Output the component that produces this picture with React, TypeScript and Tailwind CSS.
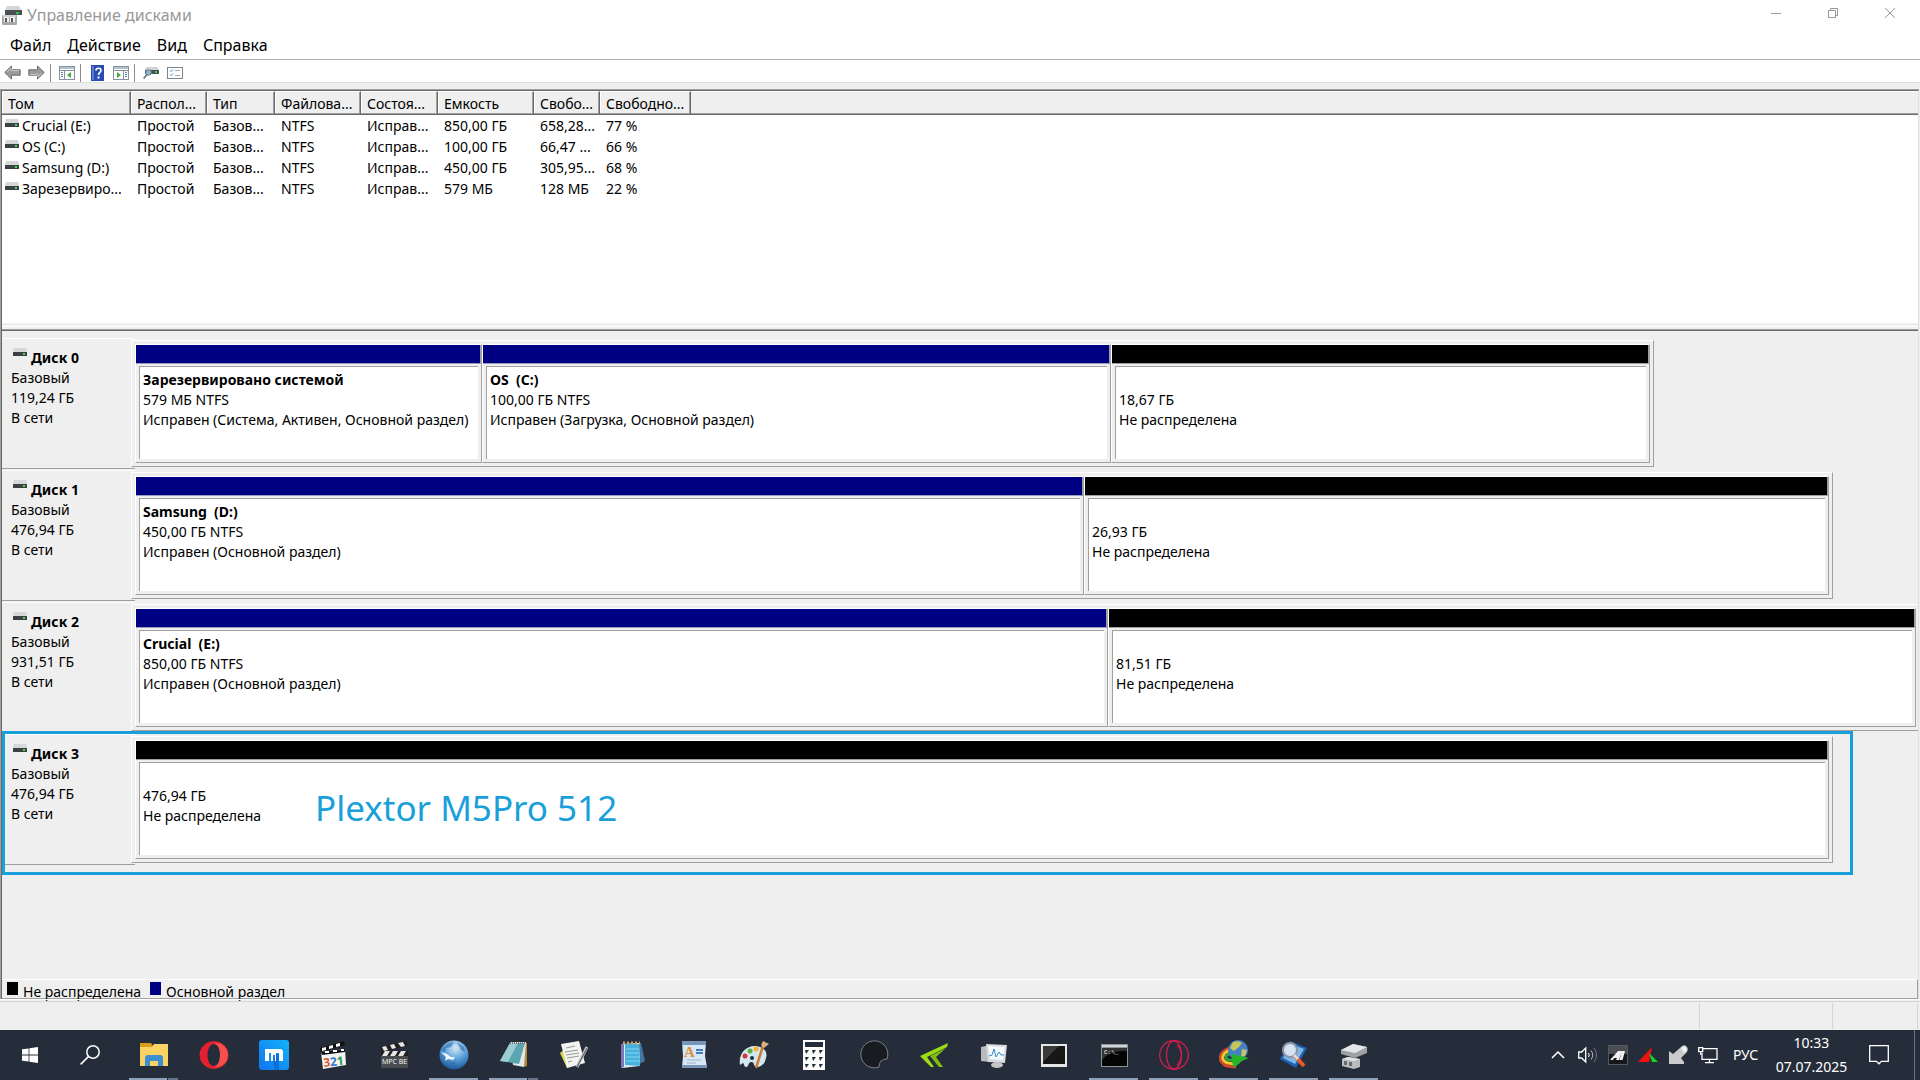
import type { ReactNode } from "react";

type Segment = { size: number; kind: "primary" | "free"; name?: string; info: string; status: string };
type Disk = { name: string; capacity: string; span: number; full?: boolean; segments: Segment[] };

const GRAPH_SPAN = 1787;

const disks: Disk[] = [
  {
    name: "Диск 0",
    capacity: "119,24 ГБ",
    span: 1523,
    segments: [
      { size: 347, kind: "primary", name: "Зарезервировано системой", info: "579 МБ NTFS", status: "Исправен (Система, Активен, Основной раздел)" },
      { size: 629, kind: "primary", name: "OS  (C:)", info: "100,00 ГБ NTFS", status: "Исправен (Загрузка, Основной раздел)" },
      { size: 539, kind: "free", info: "18,67 ГБ", status: "Не распределена" },
    ],
  },
  {
    name: "Диск 1",
    capacity: "476,94 ГБ",
    span: 1702,
    segments: [
      { size: 949, kind: "primary", name: "Samsung  (D:)", info: "450,00 ГБ NTFS", status: "Исправен (Основной раздел)" },
      { size: 745, kind: "free", info: "26,93 ГБ", status: "Не распределена" },
    ],
  },
  {
    name: "Диск 2",
    capacity: "931,51 ГБ",
    span: 1787,
    full: true,
    segments: [
      { size: 973, kind: "primary", name: "Crucial  (E:)", info: "850,00 ГБ NTFS", status: "Исправен (Основной раздел)" },
      { size: 808, kind: "free", info: "81,51 ГБ", status: "Не распределена" },
    ],
  },
  {
    name: "Диск 3",
    capacity: "476,94 ГБ",
    span: 1702,
    segments: [{ size: 1694, kind: "free", info: "476,94 ГБ", status: "Не распределена" }],
  },
];

const columns = ["Том", "Распол...", "Тип", "Файлова...", "Состоя...", "Емкость", "Свобо...", "Свободно..."];

const volumes = [
  ["Crucial (E:)", "Простой", "Базов...", "NTFS", "Исправ...", "850,00 ГБ", "658,28...", "77 %"],
  ["OS (C:)", "Простой", "Базов...", "NTFS", "Исправ...", "100,00 ГБ", "66,47 ...", "66 %"],
  ["Samsung (D:)", "Простой", "Базов...", "NTFS", "Исправ...", "450,00 ГБ", "305,95...", "68 %"],
  ["Зарезервиро...", "Простой", "Базов...", "NTFS", "Исправ...", "579 МБ", "128 МБ", "22 %"],
];

function DriveIcon() {
  return (
    <svg width="14" height="9" viewBox="0 0 14 9" className="shrink-0" aria-hidden="true">
      <path d="M1 0h12l1 4H0z" fill="#d5d7d8" />
      <rect y="4" width="14" height="4" fill="#3d4144" />
      <rect x="10" y="5" width="2" height="2" fill="#35e04a" />
    </svg>
  );
}

function AppIcon() {
  return (
    <svg width="20" height="19" viewBox="0 0 20 19" className="shrink-0" aria-hidden="true">
      <path d="M5 0h12l2 4H3z" fill="#d3d5d6" />
      <rect x="3" y="4" width="17" height="5" fill="#4b4f52" />
      <rect x="14" y="6" width="3" height="2" fill="#2fc544" />
      <rect y="9" width="15" height="10" rx="1" fill="#a6a8a9" />
      <rect x="1" y="9" width="13" height="2" fill="#cfd0d1" />
      <rect x="2" y="11" width="5" height="5" fill="#f0f0f0" />
      <rect x="8" y="11" width="5" height="5" fill="#f0f0f0" />
      <rect x="3" y="12" width="2" height="4" fill="#55585a" />
      <rect x="9" y="12" width="2" height="4" fill="#55585a" />
    </svg>
  );
}

function ArrowIcon({ right = false }: { right?: boolean }) {
  return (
    <svg width="17" height="15" viewBox="0 0 17 15" className={right ? "rotate-180" : ""} aria-hidden="true">
      <path d="M.8 7.500 7.500 1v3.800h8.700v5.400H7.500V14z" fill="#9b9b9b" stroke="#6c6c6c" />
      <path d="M3 7 7 3v2.600h8" fill="none" stroke="#c9c9c9" />
    </svg>
  );
}

function PanelIcon({ flip = false }: { flip?: boolean }) {
  return (
    <svg width="16" height="14" viewBox="0 0 16 14" aria-hidden="true">
      <rect x=".5" y=".5" width="15" height="13" fill="#fff" stroke="#8393a0" />
      <rect x="1" y="1" width="14" height="2" fill="#b4c2cc" />
      <path d="M1 4.500h14" stroke="#8393a0" />
      <path d={flip ? "M10.500 5v8" : "M5.500 5v8"} stroke="#8393a0" />
      <path d={flip ? "M12 6.500h2M12 8.500h2M12 10.500h2" : "M2 6.500h2M2 8.500h2M2 10.500h2"} stroke="#5a87b5" />
      <path d={flip ? "M4 6l4 3-4 3z" : "M12 6 8 9l4 3z"} fill="#3fae35" />
    </svg>
  );
}

function HelpIcon() {
  return (
    <svg width="13" height="16" viewBox="0 0 13 16" aria-hidden="true">
      <rect width="13" height="16" fill="#2b4bb0" />
      <rect x="1" y="1" width="2" height="14" fill="#5d78d2" />
      <path d="M5 5.500c0-3 5-3 5 0 0 2-2.500 2-2.500 4.500" fill="none" stroke="#fff" strokeWidth="1.700" />
      <rect x="6.500" y="11.500" width="2" height="2" fill="#fff" />
    </svg>
  );
}

function RescanIcon() {
  return (
    <svg width="16" height="13" viewBox="0 0 16 13" aria-hidden="true">
      <path d="M3 1h11l2 3H2z" fill="#cfd3d6" />
      <rect x="2" y="4" width="14" height="4" fill="#4a4f53" />
      <rect x="12" y="5" width="2" height="2" fill="#36d049" />
      <circle cx="5.500" cy="6.500" r="2.800" fill="#8fb6d0" stroke="#5c7f98" />
      <path d="M4 8.500.6 12.500" stroke="#666c70" strokeWidth="1.600" />
    </svg>
  );
}

function ChecklistIcon() {
  return (
    <svg width="16" height="12" viewBox="0 0 16 12" aria-hidden="true">
      <rect x=".5" y=".5" width="15" height="11" fill="#fff" stroke="#7c868e" />
      <path d="M3 3.500l1 1 2-2M3 7.500l1 1 2-2" fill="none" stroke="#3c7ec0" />
      <path d="M8 3.500h5M8 8.500h5" stroke="#9aa7b1" />
    </svg>
  );
}

function ToolButton({ label, children }: { label: string; children: ReactNode }) {
  return (
    <button aria-label={label} className="flex h-5 w-6 items-center justify-center">
      {children}
    </button>
  );
}

function ToolSeparator() {
  return <span className="mr-1 ml-px h-[18px] w-px bg-[#8c8c8c]" />;
}

function DiskSegment({ seg }: { seg: Segment }) {
  return (
    <div className="flex min-w-0 flex-col border-t border-l border-r border-b border-t-white border-l-white border-r-[#a0a0a0] border-b-[#a0a0a0]">
      <div
        className={
          seg.kind === "primary"
            ? "h-[19px] border-r border-b border-r-[#a0a0a0] border-b-[#9a9ac0] bg-[#000082]"
            : "h-[19px] border-r border-b border-r-[#a0a0a0] border-b-[#a0a0a0] bg-black"
        }
      />
      <div className="mx-[3px] mt-[2px] mb-[3px] flex-1 overflow-hidden border-t border-l border-[#a0a0a0] bg-white px-[3px] pt-[3px] leading-5 whitespace-pre">
        <div className="h-5 font-bold">{seg.name}</div>
        <div>{seg.info}</div>
        <div className="overflow-hidden">{seg.status}</div>
      </div>
    </div>
  );
}

function DiskRow({ disk, children }: { disk: Disk; children?: ReactNode }) {
  return (
    <div className="relative flex h-[132px]">
      <div className="h-[131px] w-[133px] shrink-0 border-t border-b border-t-white border-b-[#a0a0a0] pt-[9px] pl-[9px] leading-5">
        <div className="flex pl-[2px] font-bold">
          <DriveIcon />
          <span className="pl-1">{disk.name}</span>
        </div>
        <div>Базовый</div>
        <div>{disk.capacity}</div>
        <div>В сети</div>
      </div>
      <div
        className="mt-[2px] -ml-1 grid h-[127px] min-w-0 flex-1"
        style={{ gridTemplateColumns: `${disk.span}fr ${GRAPH_SPAN - disk.span}fr` }}
      >
        <div
          className={
            disk.full
              ? "grid min-w-0 border-t border-b border-l border-t-white border-b-[#a0a0a0] border-l-white py-[3px] pr-[2px] pl-[3px]"
              : "grid min-w-0 border border-t-white border-r-[#a0a0a0] border-b-[#a0a0a0] border-l-white p-[3px]"
          }
          style={{ gridTemplateColumns: disk.segments.map((s) => `${s.size}fr`).join(" ") }}
        >
          {disk.segments.map((seg) => (
            <DiskSegment key={seg.info} seg={seg} />
          ))}
        </div>
      </div>
      {children}
    </div>
  );
}

/* taskbar */

function Icon30({ children }: { children: ReactNode }) {
  return (
    <svg width="30" height="30" viewBox="0 0 30 30" aria-hidden="true">
      {children}
    </svg>
  );
}

const apps: { label: string; open?: boolean; group?: boolean; icon: ReactNode }[] = [
  {
    label: "Проводник",
    open: true,
    group: true,
    icon: (
      <Icon30>
        <path d="M1 3h11l2 3v4H1z" fill="#d99c1a" />
        <path d="M1 7h12l2-3h14v22H1z" fill="#fbd264" />
        <path d="M6 26v-8q0-3 3-3h12q3 0 3 3v8h-5v-5h-8v5z" fill="#3c8fd0" />
      </Icon30>
    ),
  },
  {
    label: "Opera",
    icon: (
      <Icon30>
        <path fillRule="evenodd" d="M15 1a14.500 14 0 1 0 .01 0zM15 4c4 0 6 5 6 11s-2 11-6 11-6.500-5-6.500-11S11 4 15 4z" fill="#e2202f" />
        <path d="M15 4c3-3 14 1 14 11S18 29 15 26c4 0 6-5 6-11S19 4 15 4z" fill="#f4504e" />
      </Icon30>
    ),
  },
  {
    label: "Maxthon",
    icon: (
      <Icon30>
        <defs>
          <linearGradient id="maxthon" x1="0" y1="1" x2="1" y2="0">
            <stop offset="0" stopColor="#1273ee" />
            <stop offset="1" stopColor="#12b4fb" />
          </linearGradient>
        </defs>
        <rect width="30" height="30" rx="3" fill="url(#maxthon)" />
        <path d="M12 14h8v16h-4z" fill="#0d6fd8" />
        <path d="M6 21V9h15q3 0 3 3v9h-4v-8h-3v8h-5v-8h-2v8z" fill="#fff" />
        <path d="M14 15h2v6h-2z" fill="#1a7ee6" />
      </Icon30>
    ),
  },
  {
    label: "Media Player Classic",
    icon: (
      <Icon30>
        <path d="M1 8 25 1l1 4L2 12z" fill="#111" />
        <path d="M3 8l4-1 0 3-4 1zM10 6l4-1 0 3-4 1zM17 4l4-1 0 3-4 1z" fill="#fff" />
        <path d="M2 12 26 9l1 16L4 29z" fill="#f4f4f4" />
        <path d="M2 12 26 9v3L3 15z" fill="#111" />
        <path d="M6 12h4M14 11h4M22 10h3" stroke="#fff" strokeWidth="2" />
        <text x="4" y="26" fontFamily="Open Sans, sans-serif" fontSize="12" fontWeight="700" transform="rotate(-6 14 20)">
          <tspan fill="#dd5528">3</tspan>
          <tspan fill="#2878cc">2</tspan>
          <tspan fill="#299b3a">1</tspan>
        </text>
      </Icon30>
    ),
  },
  {
    label: "MPC-BE",
    icon: (
      <Icon30>
        <path d="M1 7 27 1l1 5L3 12z" fill="#202020" />
        <path d="M3 7l4-1 2 4-4 1zM11 5l4-1 2 4-4 1zM19 3l5-1 2 4-4 1z" fill="#e6e6e6" />
        <rect x="2" y="11" width="27" height="17" rx="1" fill="#4a4c4f" />
        <rect x="2" y="11" width="27" height="5" fill="#202020" />
        <path d="M6 11h5l-3 5H3zM14 11h5l-3 5h-5zM22 11h5l-3 5h-5z" fill="#e6e6e6" />
        <text x="3" y="24" fontFamily="Open Sans, sans-serif" fontSize="7" fill="#fff">MPC BE</text>
      </Icon30>
    ),
  },
  {
    label: "Сеть",
    open: true,
    icon: (
      <Icon30>
        <defs>
          <radialGradient id="globe" cx=".55" cy=".25" r=".8">
            <stop offset="0" stopColor="#d6e9f8" />
            <stop offset=".5" stopColor="#5a9fd8" />
            <stop offset="1" stopColor="#174c94" />
          </radialGradient>
        </defs>
        <circle cx="15" cy="15" r="14.500" fill="url(#globe)" />
        <path d="M3 10q5-8 12-8l-3 5-5 1-1 4zM18 2l7 5 1 5-4-2zM10 22l6 0 1 3-3 2z" fill="#2f6dab" opacity=".6" />
        <path d="M2 12l6 2 4 3 4 0-2 3-5-1-3 2 1-4z" fill="#eef6fc" />
      </Icon30>
    ),
  },
  {
    label: "Блокнот AkelPad",
    open: true,
    group: true,
    icon: (
      <Icon30>
        <path d="M22 3h6v23l-4 1z" fill="#b98435" />
        <path d="M11 2h16l-2 25-11-2z" fill="#dfe8e9" />
        <path d="M11 3h15l-6 21L1 21z" fill="#5aa5b0" />
        <path d="M11 3h8L9 22l-8-1z" fill="#9accd2" />
        <path d="M11 3h16" stroke="#777" strokeWidth="2" strokeDasharray="1 1" />
      </Icon30>
    ),
  },
  {
    label: "Редактор",
    icon: (
      <Icon30>
        <path d="M1 13l4-3 8 16-5 2z" fill="#d9d645" />
        <path d="M2 4 20 1l6 22-18 5z" fill="#f3f3f1" />
        <path d="M7 8l9-2M6 12l13-2M7 15l13-2M8 18l12-2M9 22l4-1" stroke="#999" />
        <path d="M28 7 18 27" stroke="#c1c4c8" strokeWidth="3" />
        <path d="M28 8 18 27" stroke="#50545a" />
      </Icon30>
    ),
  },
  {
    label: "Notepad",
    icon: (
      <Icon30>
        <path d="M18 4l4-1 4 18-9 5z" fill="#47749f" />
        <path d="M2 4 20 3l1 23-18 2z" fill="#e5eef2" />
        <path d="M6 4h14l1 22-15-1z" fill="#46b0de" />
        <path d="M2 4l3 0 0 23-3 1z" fill="#8274b8" />
        <path d="M7 9h13M7 13h13M7 17h14M7 21h14" stroke="#85d6f3" />
        <path d="M4 3h17" stroke="#c7a46a" strokeWidth="3" strokeDasharray="2 2" />
      </Icon30>
    ),
  },
  {
    label: "WordPad",
    icon: (
      <Icon30>
        <path d="M3 1h24l-1 15 2 11H3l1-11z" fill="#d5e8f5" />
        <path d="M3 1h24v4H3zM3 25h25v3H3z" fill="#7695b8" />
        <text x="5" y="17" fontFamily="Liberation Serif, serif" fontSize="15" fontWeight="700" fill="#e78a35">A</text>
        <path d="M17 10h7M17 13h7" stroke="#4777bc" strokeWidth="2" />
        <path d="M8 20h14M8 23h9" stroke="#9fb3c2" />
      </Icon30>
    ),
  },
  {
    label: "Paint",
    icon: (
      <Icon30>
        <path d="M1 25C-1 13 8 5 17 6c8 1 12 6 10 12-1 5-4 9-9 9-4 0-2-4-5-5-4-1-3 5-6 5-2 0-2-4-3-4z" fill="#d3e7f2" />
        <circle cx="6" cy="16" r="2.500" fill="#d5373c" />
        <circle cx="11" cy="11" r="2.500" fill="#5bae44" />
        <circle cx="17" cy="9" r="2.500" fill="#efb72f" />
        <circle cx="13" cy="18" r="2" fill="#262d3a" />
        <path d="M24 6 17 28" stroke="#ce7c35" strokeWidth="2.500" />
        <path d="M22 5l2-4 6 3-5 4z" fill="#dab180" />
      </Icon30>
    ),
  },
  {
    label: "Калькулятор",
    icon: (
      <Icon30>
        <rect x="4" width="22" height="30" fill="#fff" />
        <rect x="6" y="2" width="18" height="5" fill="#262d3a" />
        <path d="M6 10h4l-3 4zM13 10h4l-3 4zM20 10h4l-3 4zM6 17h4l-3 4zM13 17h4l-3 4zM20 17h4l-3 4zM6 24h4l-3 4zM13 24h4l-3 4zM20 24h4l-3 4z" fill="#262d3a" />
      </Icon30>
    ),
  },
  {
    label: "Заметки",
    icon: (
      <Icon30>
        <path d="M20 27A13.500 13.500 0 1 1 28 19Q20 19 20 27" fill="#181c20" stroke="#7b8086" />
      </Icon30>
    ),
  },
  {
    label: "GeForce",
    icon: (
      <Icon30>
        <path d="M29 3 1 16l11 11h3l-7-10L28 7z" fill="#9ddb14" />
        <path d="M27 8 11 16l9 11h4l-7-10z" fill="#7fbd10" />
      </Icon30>
    ),
  },
  {
    label: "Монитор ресурсов",
    icon: (
      <Icon30>
        <path d="M2 7l9-2v17l-9-1z" fill="#b9bcbe" />
        <path d="M7 4 28 5l-2 18-17-1z" fill="#d9dbdc" />
        <path d="M9 6l17 1-2 13-13-1z" fill="#f5fafd" />
        <path d="M10 16l3-1 2-6 2 8 3-5 2 3h3" fill="none" stroke="#3889c9" />
        <ellipse cx="18" cy="25" rx="6" ry="3" fill="#c5c7c9" />
      </Icon30>
    ),
  },
  {
    label: "Экран",
    icon: (
      <Icon30>
        <rect x="2" y="4" width="26" height="23" fill="#e6e6e6" />
        <rect x="4" y="6" width="22" height="18" fill="#171717" />
        <path d="M4 6h16L4 22z" fill="#3a3a3a" />
      </Icon30>
    ),
  },
  {
    label: "Командная строка",
    open: true,
    icon: (
      <Icon30>
        <rect x="2" y="4" width="27" height="23" fill="#8b9298" />
        <rect x="3" y="5" width="25" height="2" fill="#cfd5d9" />
        <rect x="3" y="8" width="25" height="18" fill="#050505" />
        <path d="M3 8h25v3Q10 10 3 20z" fill="#303234" />
        <text x="5" y="14" fontFamily="Liberation Mono, monospace" fontSize="6" fill="#fff">C:\_</text>
      </Icon30>
    ),
  },
  {
    label: "Opera GX",
    open: true,
    icon: (
      <Icon30>
        <g fill="none" stroke="#dc1d4a" strokeWidth="1.200">
          <circle cx="15" cy="15" r="14.300" />
          <ellipse cx="15" cy="15" rx="7.500" ry="14" />
          <path d="M18 5c6 5 6 15 0 20" />
        </g>
      </Icon30>
    ),
  },
  {
    label: "Download Manager",
    open: true,
    icon: (
      <Icon30>
        <path d="M13 8C-1 9-2 23 8 26l9 1" fill="none" stroke="#d8452c" strokeWidth="3" />
        <path d="M13 10C2 12 1 21 9 23l8 1" fill="none" stroke="#f0ca2c" strokeWidth="3" />
        <path d="M14 13C6 14 5 19 10 20l8 0" fill="none" stroke="#30a33c" strokeWidth="3" />
        <circle cx="19" cy="10" r="10" fill="#4480c4" />
        <path d="M14 2q6-2 9 1l-3 4-5 4-4-3zM23 9l5 1-2 6-4 1z" fill="#c6c65a" />
        <path d="M13 14l17 4-7 3-8 7-2-6z" fill="#24b529" />
      </Icon30>
    ),
  },
  {
    label: "Поиск файлов",
    open: true,
    icon: (
      <Icon30>
        <path d="M11 1 28 8 17 28 1 19z" fill="#1f62b4" />
        <path d="M12 4 25 9 16 24 4 18z" fill="#7db8e8" />
        <circle cx="11" cy="10" r="7" fill="#d6e1f2" stroke="#8d93a9" strokeWidth="2" />
        <path d="M16 16l9 10" stroke="#e8592c" strokeWidth="4" />
        <path d="M15 15l4 4" stroke="#ddd" strokeWidth="3" />
      </Icon30>
    ),
  },
  {
    label: "Управление дисками",
    open: true,
    icon: (
      <Icon30>
        <path d="M2 10 14 4l14 3v6l-12 5-14-4z" fill="#9fa1a3" />
        <path d="M2 10 14 4l14 3-12 6z" fill="#e4e5e6" />
        <path d="M3 19l6-2 12 2v8l-6 2-12-3z" fill="#b9bbbc" />
        <path d="M3 19l6-2 12 2-6 2z" fill="#e2e2e2" />
        <path d="M5 21h3v4H5zM10 22h3v4h-3z" fill="#6b6e70" />
      </Icon30>
    ),
  },
];

function Taskbar() {
  return (
    <footer className="flex h-[50px] items-stretch bg-[#262d3a] text-white">
      <button aria-label="Пуск" className="flex w-[60px] items-center justify-center">
        <svg width="16" height="16" viewBox="0 0 16 16" fill="#fff" aria-hidden="true">
          <path d="M0 2.300 6.600 1.400v6.200H0zM7.400 1.300 16 0v7.600H7.400zM0 8.400h6.600v6.200L0 13.700zM7.400 8.400H16V16l-8.600-1.300z" />
        </svg>
      </button>
      <button aria-label="Поиск" className="flex w-[60px] items-center justify-center">
        <svg width="20" height="20" viewBox="0 0 20 20" fill="none" stroke="#fff" strokeWidth="1.500" aria-hidden="true">
          <circle cx="13" cy="7" r="6.200" />
          <path d="M8.600 11.400.6 19.400" />
        </svg>
      </button>
      <div className="flex flex-1 gap-[11px] pl-[9px]">
        {apps.map((app) => (
          <button key={app.label} aria-label={app.label} className="flex w-[49px] flex-col items-center pt-[10px]">
            {app.icon}
            {app.open && (
              <span className="mt-auto flex h-[2px] w-full bg-[#8fa1b8]">
                {app.group && <span className="ml-auto w-[11px] border-l border-[#262d3a] bg-[#66758a]" />}
              </span>
            )}
          </button>
        ))}
      </div>
      <div className="flex items-center gap-[10px] text-sm">
        <button aria-label="Скрытые значки" className="flex w-[20px] justify-center">
          <svg width="14" height="8" viewBox="0 0 14 8" fill="none" stroke="#fff" strokeWidth="1.500" aria-hidden="true">
            <path d="M1 7l6-6 6 6" />
          </svg>
        </button>
        <button aria-label="Громкость">
          <svg width="20" height="18" viewBox="0 0 20 18" fill="none" stroke="#fff" aria-hidden="true">
            <path d="M.7 6h3l4-4v14l-4-4h-3z" strokeWidth="1.300" />
            <path d="M10.500 7q1.500 2 0 4" />
            <path d="M13 4.500q3.500 4.500 0 9" stroke="#b5b9bf" />
            <path d="M16 2q5 7 0 14" stroke="#717784" />
          </svg>
        </button>
        <button aria-label="AI Suite">
          <svg width="20" height="20" viewBox="0 0 20 20" aria-hidden="true">
            <rect x=".5" y=".5" width="19" height="19" fill="#15171a" stroke="#54595f" />
            <path d="M1 1h18v8H1z" fill="#4a4d51" />
            <path d="M2 15 10 6h4l-3 9H8l1-2H6l-1 2zM14 6h3l-2.500 9h-3z" fill="#f1f1f1" />
          </svg>
        </button>
        <button aria-label="Afterburner">
          <svg width="20" height="18" viewBox="0 0 20 18" aria-hidden="true">
            <path d="M14 1 0 16h11z" fill="#f01010" />
            <path d="M11 7l9 9h-6z" fill="#15d42c" />
          </svg>
        </button>
        <button aria-label="Безопасное извлечение">
          <svg width="20" height="20" viewBox="0 0 20 20" aria-hidden="true">
            <path d="M12 3q3-4 6-2t1 6l-6 6 3 4v2H1V6l4 3z" fill="#c9cacb" />
            <path d="M13 3l4-2 2 4-3 3z" fill="#f1f1f1" />
          </svg>
        </button>
        <button aria-label="Сеть">
          <svg width="20" height="17" viewBox="0 0 20 17" fill="none" stroke="#fff" strokeWidth="1.300" aria-hidden="true">
            <path d="M5 1.700h14v10.600H4V6M11.500 12.500v3M7 15.700h9" />
            <path d="M.7.700h4v4h-4zM2.700 5v3" />
          </svg>
        </button>
        <button className="ml-1 w-[27px]">РУС</button>
        <button className="w-[85px] text-center leading-6">
          <span className="block">10:33</span>
          <span className="block">07.07.2025</span>
        </button>
        <button aria-label="Уведомления" className="mr-[25px] ml-[5px]">
          <svg width="20" height="20" viewBox="0 0 20 20" fill="none" stroke="#fff" strokeWidth="1.300" aria-hidden="true">
            <path d="M.7.700h18.600v15.600h-6.800L10 18.800l-2.500-2.500H.7z" />
          </svg>
        </button>
      </div>
      <div className="w-[6px] border-l border-[#6c727c]" />
    </footer>
  );
}

export default function App() {
  return (
    <div className="flex min-h-screen flex-col bg-[#efefef] font-['Noto_Sans','Open_Sans',sans-serif] text-sm text-black">
      <header className="flex h-[30px] items-center bg-white pl-[2px] text-base text-[#999]">
        <AppIcon />
        <h1 className="flex-1 pl-[5px]">Управление дисками</h1>
        <div className="flex h-[26px] self-start pr-px">
          <button aria-label="Свернуть" className="flex w-[57px] items-center justify-center">
            <svg width="10" height="10" viewBox="0 0 10 10" stroke="#999" aria-hidden="true">
              <path d="M0 5.500h10" />
            </svg>
          </button>
          <button aria-label="Развернуть" className="flex w-[57px] items-center justify-center">
            <svg width="10" height="10" viewBox="0 0 10 10" fill="none" stroke="#999" aria-hidden="true">
              <path d="M.5 2.500h7v7h-7zM2.500 2.500v-2h7v7h-2" />
            </svg>
          </button>
          <button aria-label="Закрыть" className="flex w-[58px] items-center justify-center">
            <svg width="10" height="10" viewBox="0 0 10 10" stroke="#999" aria-hidden="true">
              <path d="M0 0l10 10M10 0 0 10" />
            </svg>
          </button>
        </div>
      </header>

      <nav className="flex h-[30px] items-center gap-4 border-b border-[#b0b0b0] bg-white pl-[10px] text-base">
        <button>Файл</button>
        <button>Действие</button>
        <button>Вид</button>
        <button>Справка</button>
      </nav>

      <div className="mb-[6px] flex h-[23px] items-center border-b border-[#dcdcdc] bg-white pt-[3px]">
        <ToolButton label="Назад"><ArrowIcon /></ToolButton>
        <ToolButton label="Вперед"><ArrowIcon right /></ToolButton>
        <span className="w-px" />
        <ToolSeparator />
        <ToolButton label="Показать дерево"><PanelIcon /></ToolButton>
        <ToolSeparator />
        <ToolButton label="Справка"><HelpIcon /></ToolButton>
        <ToolButton label="Панель действий"><PanelIcon flip /></ToolButton>
        <ToolSeparator />
        <ToolButton label="Обновить"><RescanIcon /></ToolButton>
        <ToolButton label="Свойства"><ChecklistIcon /></ToolButton>
      </div>

      <main className="mr-px flex flex-1 flex-col border-t border-l border-[#a0a0a0]">
        <div className="flex flex-1 flex-col border-t border-r border-l border-t-[#696969] border-r-[#e0e0e0] border-l-[#696969]">
          <section className="h-[232px] bg-white">
            <table className="w-full table-fixed border-separate border-spacing-0 text-left">
              <colgroup>
                <col className="w-[129px]" />
                <col className="w-[76px]" />
                <col className="w-[68px]" />
                <col className="w-[86px]" />
                <col className="w-[77px]" />
                <col className="w-[96px]" />
                <col className="w-[66px]" />
                <col className="w-[91px]" />
                <col />
              </colgroup>
              <thead>
                <tr className="h-[24px] bg-[#efefef]">
                  {columns.map((c) => (
                    <th
                      key={c}
                      scope="col"
                      className="overflow-hidden border-t border-r border-b border-t-white border-r-[#696969] border-b-[#696969] p-0 pt-px pl-[6px] leading-5 font-normal whitespace-nowrap shadow-[inset_0_-1px_0_#a0a0a0,inset_-1px_0_0_#a0a0a0,inset_1px_0_0_#fff]"
                    >
                      {c}
                    </th>
                  ))}
                  <td className="border-t border-b border-t-white border-b-[#696969] p-0 shadow-[inset_0_-1px_0_#a0a0a0]" />
                </tr>
              </thead>
              <tbody>
                {volumes.map((row) => (
                  <tr key={row[0]} className="h-[21px]">
                    {row.map((cell, i) => (
                      <td key={i} className="overflow-hidden p-0 pl-[6px] leading-5 whitespace-nowrap">
                        {i === 0 ? (
                          <span className="-ml-[3px] flex items-start gap-[3px]">
                            <span className="flex pt-[3px]"><DriveIcon /></span>
                            {cell}
                          </span>
                        ) : (
                          cell
                        )}
                      </td>
                    ))}
                  </tr>
                ))}
              </tbody>
            </table>
          </section>

          <div className="h-[6px] border-b-2 border-[#efefef]">
            <div className="h-[4px] border-b border-white" />
          </div>

          <section className="flex-1 border-t border-[#a0a0a0]">
            <div className="border-t border-[#696969] pt-[7px]">
              {disks.map((disk) => (
                <DiskRow key={disk.name} disk={disk}>
                  {disk.name === "Диск 3" && (
                    <div className="absolute -top-[3px] right-[65px] left-0 flex h-[144px] items-center border-3 border-[#199fda] pt-[10px] pl-[310px] text-[35px] text-[#199fda]">
                      Plextor M5Pro 512
                    </div>
                  )}
                </DiskRow>
              ))}
            </div>
          </section>

          <div className="flex h-[20px] items-start border-t border-r border-b border-t-white border-r-[#a0a0a0] border-b-[#a0a0a0] pt-[2px] pl-[5px]">
            <span className="h-[13px] w-[11px] bg-black" />
            <span className="pr-[9px] pl-[5px] leading-5">Не распределена</span>
            <span className="h-[13px] w-[11px] bg-[#000082]" />
            <span className="pr-[9px] pl-[5px] leading-5">Основной раздел</span>
          </div>
        </div>
      </main>

      <div className="flex h-[31px] flex-col border-t border-white">
        <div className="mt-px flex flex-1 justify-end border-t border-[#d5d5d5] pt-px pr-[2px] pb-px">
          <div className="w-[133px] border-l border-[#d5d5d5]" />
          <div className="w-[86px] border-r border-l border-[#d5d5d5]" />
        </div>
      </div>

      <Taskbar />
    </div>
  );
}
